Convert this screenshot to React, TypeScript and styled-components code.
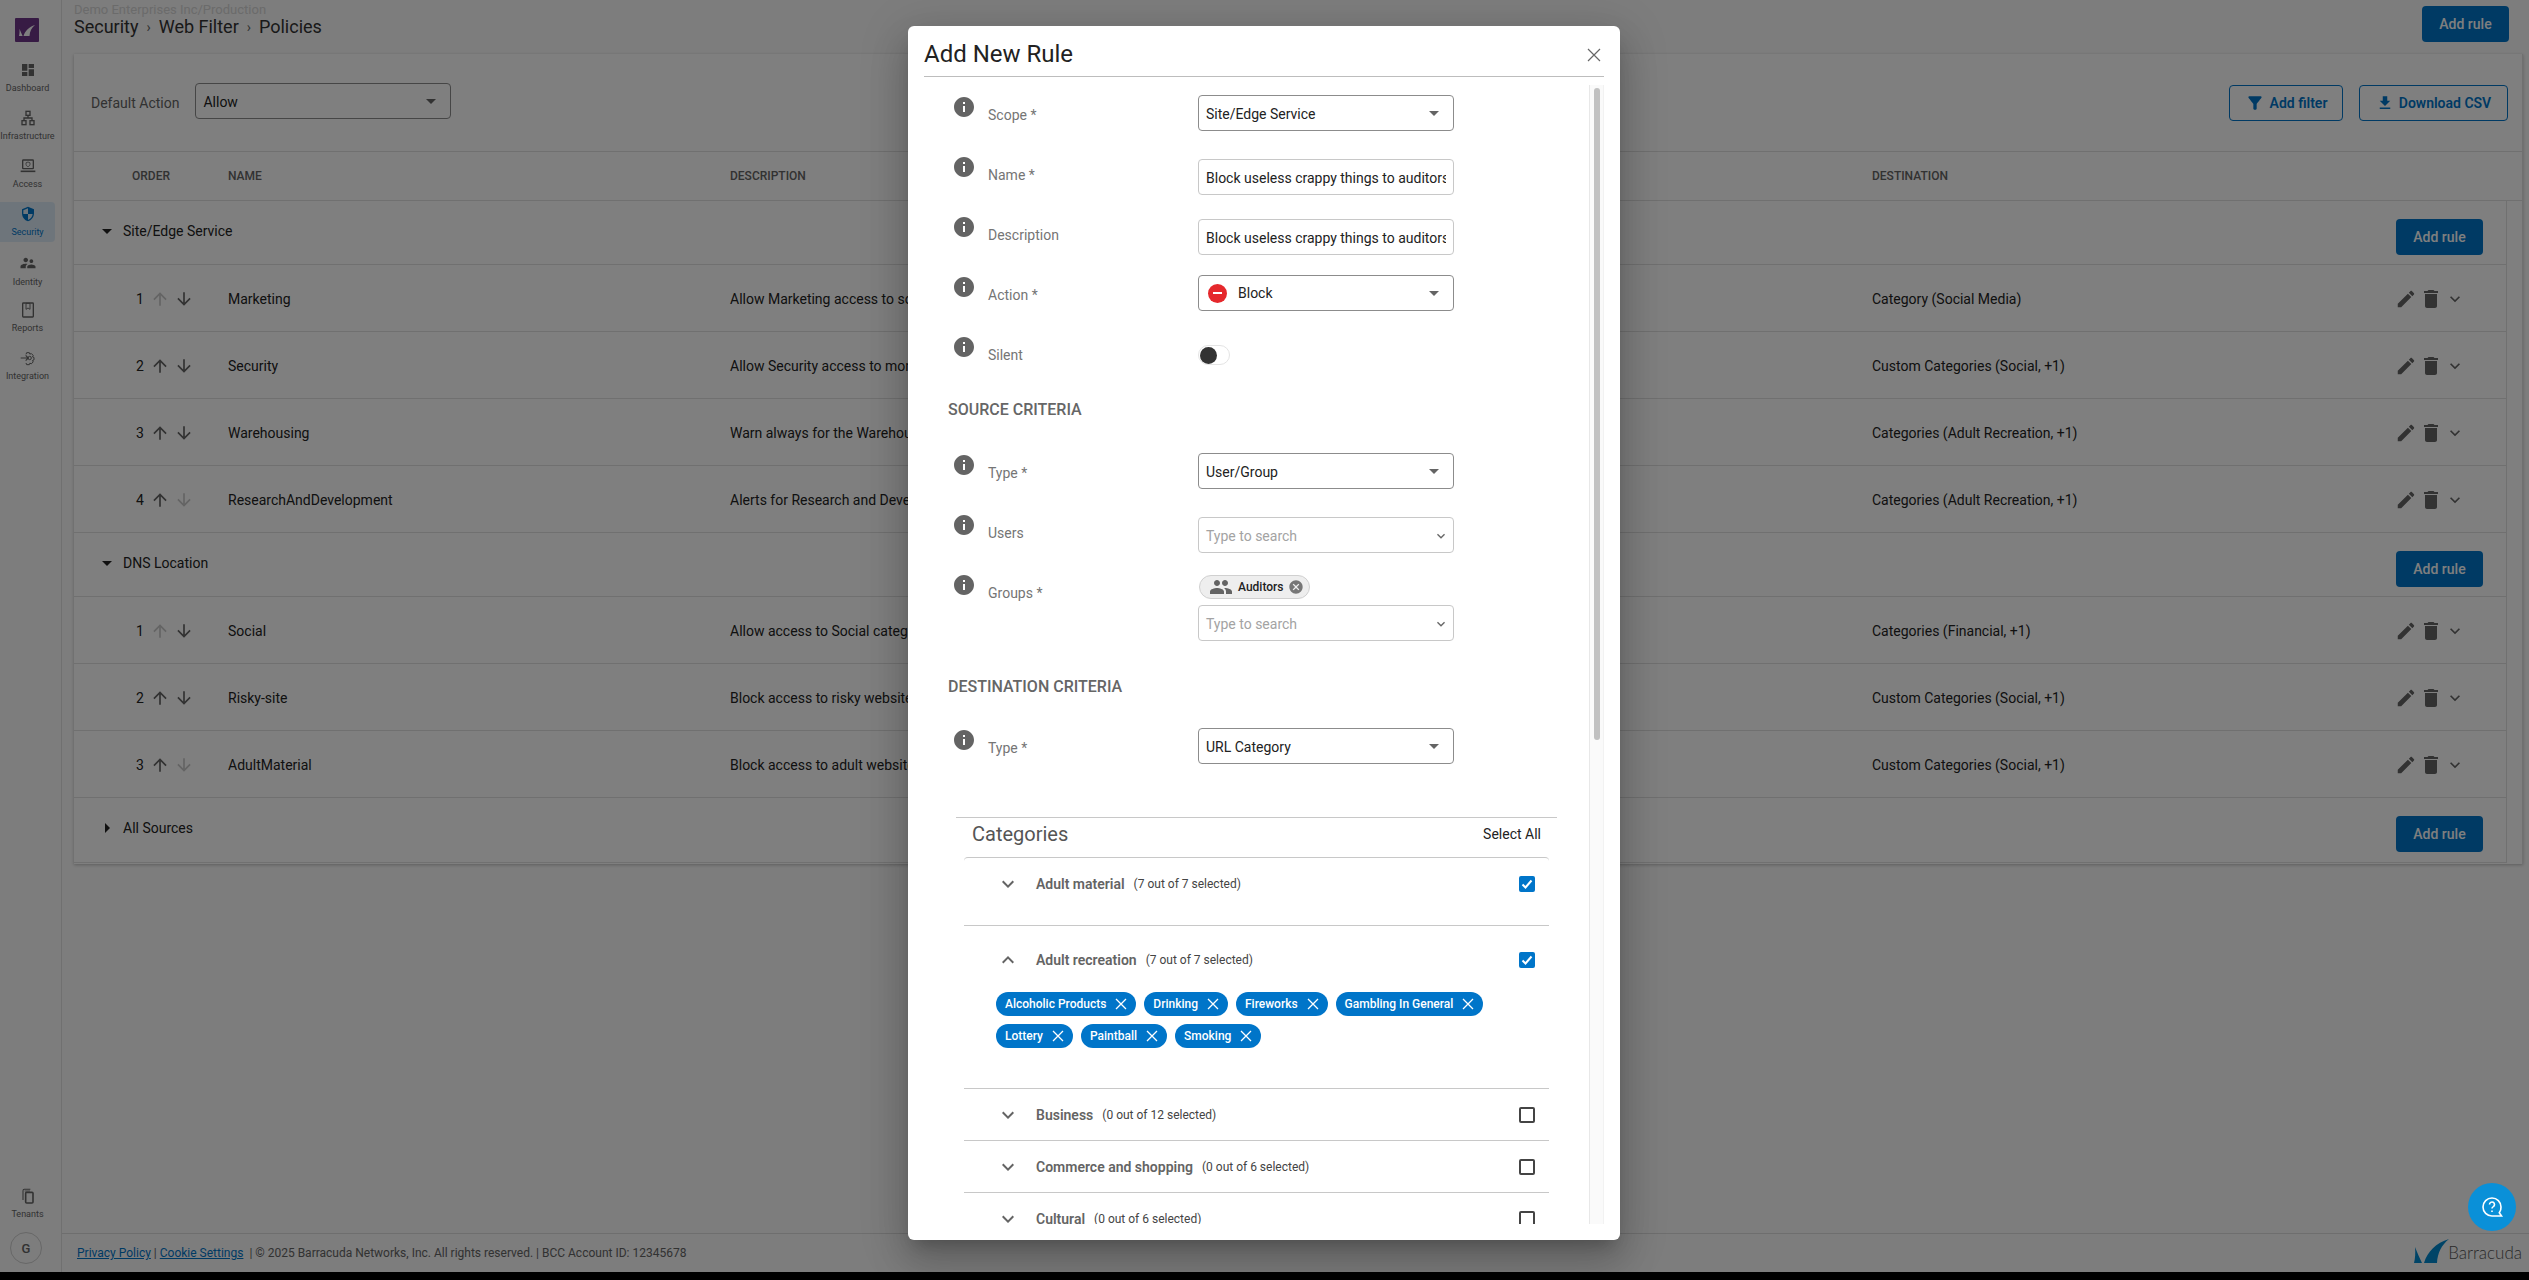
import React, { FunctionComponent } from "react";
import styled, { createGlobalStyle } from "styled-components";

const blue = "#0075c9";
const grey = "#646464";

const GlobalStyle = createGlobalStyle`
  html, body {
    margin: 0;
    background: #000;
    overflow: hidden;
    font-family: Roboto, "Liberation Sans", sans-serif;
    font-size: 14px;
  }
  * { box-sizing: border-box; }
`;

const paths = {
  info: "M12 2C6.48 2 2 6.48 2 12s4.48 10 10 10 10-4.48 10-10S17.52 2 12 2zm1 15h-2v-6h2v6zm0-8h-2V7h2v2z",
  dashboard: "M3 13h8V3H3v10zm0 8h8v-6H3v6zm10 0h8V11h-8v10zm0-18v6h8V3h-8z",
  security:
    "M12 1L3 5v6c0 5.55 3.84 10.74 9 12 5.16-1.26 9-6.45 9-12V5l-9-4zm0 10.99h7c-.53 4.12-3.28 7.79-7 8.94V12H5V6.3l7-3.11v8.8z",
  identity:
    "M16.5 12c1.38 0 2.49-1.12 2.49-2.5S17.88 7 16.5 7C15.12 7 14 8.12 14 9.5s1.12 2.5 2.5 2.5zM9 11c1.66 0 3-1.34 3-3s-1.34-3-3-3-3 1.34-3 3 1.34 3 3 3zm7.5 3c-1.83 0-5.5.92-5.5 2.75V19h11v-2.25c0-1.83-3.67-2.75-5.5-2.75zM9 13c-2.33 0-7 1.17-7 3.5V19h7v-2.25c0-.85.33-2.34 2.37-3.47C10.5 13.1 9.66 13 9 13z",
  up: "M4 12l1.41 1.41L11 7.83V20h2V7.83l5.58 5.59L20 12l-8-8-8 8z",
  down: "M20 12l-1.41-1.41L13 16.17V4h-2v12.17l-5.58-5.59L4 12l8 8 8-8z",
  edit: "M3 17.25V21h3.75L17.81 9.94l-3.75-3.75L3 17.25zM20.71 7.04c.39-.39.39-1.02 0-1.41l-2.34-2.34c-.39-.39-1.02-.39-1.41 0l-1.83 1.83 3.75 3.75 1.83-1.83z",
  trash: "M6 19c0 1.1.9 2 2 2h8c1.1 0 2-.9 2-2V7H6v12zM19 4h-3.5l-1-1h-5l-1 1H5v2h14V4z",
  expand: "M7.41 8.59L12 13.17l4.59-4.58L18 10l-6 6-6-6 1.41-1.41z",
  collapse: "M12 8l-6 6 1.41 1.41L12 10.83l4.59 4.58L18 14z",
  caret: "M7 10l5 5 5-5z",
  caretRight: "M10 7l5 5-5 5z",
  filter:
    "M4.25 5.61C6.27 8.2 10 13 10 13v6c0 .55.45 1 1 1h2c.55 0 1-.45 1-1v-6s3.72-4.8 5.74-7.39c.51-.66.04-1.61-.79-1.61H5.04c-.83 0-1.3.95-.79 1.61z",
  download: "M19 9h-4V3H9v6H5l7 7 7-7zM5 18v2h14v-2H5z",
  group:
    "M16 11c1.66 0 2.99-1.34 2.99-3S17.66 5 16 5c-1.66 0-3 1.34-3 3s1.34 3 3 3zm-8 0c1.66 0 2.99-1.34 2.99-3S9.66 5 8 5C6.34 5 5 6.34 5 8s1.34 3 3 3zm0 2c-2.33 0-7 1.17-7 3.5V19h14v-2.5c0-2.33-4.67-3.5-7-3.5zm8 0c-.29 0-.62.02-.97.05 1.16.84 1.97 1.97 1.97 3.45V19h6v-2.5c0-2.33-4.67-3.5-7-3.5z",
  cancel:
    "M12 2C6.47 2 2 6.47 2 12s4.47 10 10 10 10-4.47 10-10S17.53 2 12 2zm5 13.59L15.59 17 12 13.41 8.41 17 7 15.59 10.59 12 7 8.41 8.41 7 12 10.59 15.59 7 17 8.41 13.41 12 17 15.59z",
};

const Svg = styled.svg<{ $size: number; $color?: string; $dim?: boolean }>`
  width: ${(p) => p.$size}px;
  height: ${(p) => p.$size}px;
  flex: none;
  display: block;
  fill: ${(p) => p.$color || grey};
  opacity: ${(p) => (p.$dim ? 0.35 : 1)};
`;

type IconProps = { d: string; size?: number; color?: string; dim?: boolean };

const Icon: FunctionComponent<IconProps> = ({ d, size = 24, color, dim }) => (
  <Svg viewBox="0 0 24 24" $size={size} $color={color} $dim={dim}>
    <path d={d} />
  </Svg>
);

const Outline = styled.svg<{ $color?: string }>`
  width: 16px;
  height: 16px;
  display: block;
  fill: none;
  stroke: ${(p) => p.$color || grey};
  stroke-width: 2;
`;

const InfrastructureIcon = () => (
  <Outline viewBox="0 0 24 24">
    <rect x="9" y="2" width="6" height="6" />
    <rect x="3" y="16" width="6" height="6" />
    <rect x="15" y="16" width="6" height="6" />
    <path d="M12 8v4M6 16v-4h12v4" />
  </Outline>
);

const AccessIcon = () => (
  <Outline viewBox="0 0 24 24">
    <rect x="4" y="3" width="16" height="13" rx="1" />
    <path d="M1 20h22" strokeWidth="2.4" />
    <path d="M12 6l3 1.2v2.3c0 1.6-1.3 2.9-3 3.5-1.7-.6-3-1.9-3-3.5V7.2z" strokeWidth="1.2" />
  </Outline>
);

const ReportsIcon = () => (
  <Outline viewBox="0 0 24 24">
    <rect x="4" y="1.5" width="16" height="21" rx="1" />
    <path d="M9 2v9l3-2 3 2V2z" strokeWidth="1.4" />
  </Outline>
);

const IntegrationIcon = () => (
  <Outline viewBox="0 0 24 24">
    <path d="M1 12h11M8.5 8l4 4-4 4" strokeWidth="1.6" />
    <path
      d="M9 6.5l1-2.5h4l.8 2.2 2.2-.9 2.8 2.8-1 2.2 2.2.9v3.6l-2.2.9 1 2.2-2.8 2.8-2.2-.9-.8 2.2h-4l-1-2.5"
      strokeWidth="1.5"
    />
    <circle cx="14.5" cy="12" r="2.5" strokeWidth="1.5" />
  </Outline>
);

const TenantsIcon = () => (
  <Outline viewBox="0 0 24 24">
    <rect x="8.5" y="6.5" width="11" height="16" rx="1.5" strokeWidth="2.4" />
    <path d="M4.5 18V4a2 2 0 0 1 2-2h9" strokeWidth="1.6" />
    <path d="M7 4.5h8" strokeWidth="1.2" />
  </Outline>
);

const FinSvg = styled.svg<{ $w: number; $h: number; $color: string }>`
  width: ${(p) => p.$w}px;
  height: ${(p) => p.$h}px;
  display: block;
  fill: ${(p) => p.$color};
`;

const Fins: FunctionComponent<{ w: number; h: number; color: string }> = ({ w, h, color }) => (
  <FinSvg viewBox="0 0 35 24" $w={w} $h={h} $color={color}>
    <path d="M0 24c1.2-4.5 1.6-10 1-16 2 5.500 4.800 11 7 16z" />
    <path d="M10 24C13.500 12.500 22 4 35 0c-7.500 6-11.500 14-12 24z" />
  </FinSvg>
);

const Page = styled.div`
  position: relative;
  display: flex;
  height: 1272px;
  overflow: hidden;
  background: #fafafa;
  color: #222;
`;

const Sidebar = styled.nav`
  width: 62px;
  flex: none;
  display: flex;
  flex-direction: column;
  border-right: 1px solid #e0e0e0;
  padding-top: 18px;
`;

const Logo = styled.div`
  width: 24px;
  height: 24px;
  margin: 0 0 16px 15px;
  background: #6f3689;
  border-radius: 1px;
  display: flex;
  align-items: center;
  justify-content: center;
`;

const NavList = styled.div`
  display: flex;
  flex-direction: column;
  gap: 8px;
`;

const NavItem = styled.div<{ $active?: boolean }>`
  width: 55px;
  height: 40px;
  padding-top: 4px;
  display: flex;
  flex-direction: column;
  align-items: center;
  gap: 4px;
  border-radius: 0 4px 4px 0;
  background: ${(p) => (p.$active ? "#dcebf7" : "transparent")};
  color: ${(p) => (p.$active ? blue : grey)};
  font-size: 9px;
  line-height: 12px;
`;

const SidebarFoot = styled.div`
  margin-top: auto;
  display: flex;
  flex-direction: column;
  gap: 8px;
  padding-bottom: 8px;
`;

const Avatar = styled.div`
  width: 32px;
  height: 32px;
  margin-left: 10px;
  border-radius: 50%;
  border: 1px solid #cfcfcf;
  display: flex;
  align-items: center;
  justify-content: center;
  font-size: 13px;
  font-weight: 500;
  color: ${grey};
`;

const Main = styled.main`
  flex: 1;
  min-width: 0;
  display: flex;
  flex-direction: column;
`;

const TopBar = styled.header`
  height: 54px;
  flex: none;
  display: flex;
  justify-content: space-between;
  align-items: flex-start;
  padding: 0 20px 0 12px;
`;

const Tenant = styled.div`
  margin-top: 3px;
  font-size: 13px;
  line-height: 14px;
  color: #d6d6d6;
`;

const Crumbs = styled.div`
  display: flex;
  align-items: center;
  gap: 8px;
  font-size: 18px;
  line-height: 22px;
  margin-top: -1px;
  color: #333;
`;

const CrumbSep = styled.span`
  font-size: 14px;
  color: ${grey};
`;

const FilledButton = styled.div<{ $top?: number }>`
  width: 87px;
  height: 36px;
  margin-top: ${(p) => p.$top || 0}px;
  flex: none;
  display: flex;
  align-items: center;
  justify-content: center;
  border-radius: 4px;
  background: ${blue};
  color: #fff;
  font-weight: 500;
`;

const Card = styled.section`
  height: 810px;
  flex: none;
  margin: 0 6px 0 12px;
  background: #fff;
  border-right: 1px solid #e0e0e0;
  box-shadow: 0 1px 3px rgba(0, 0, 0, 0.25);
`;

const Toolbar = styled.div`
  height: 98px;
  display: flex;
  align-items: center;
  padding: 0 14px 0 17px;
  border-bottom: 1px solid #e0e0e0;
`;

const ToolbarLabel = styled.span`
  color: ${grey};
  margin-right: 16px;
`;

const ToolbarActions = styled.div`
  margin-left: auto;
  display: flex;
  gap: 16px;
`;

const OutlineButton = styled.div<{ $w: number }>`
  width: ${(p) => p.$w}px;
  height: 36px;
  display: flex;
  align-items: center;
  justify-content: center;
  gap: 5px;
  border: 1px solid ${blue};
  border-radius: 4px;
  color: ${blue};
  font-weight: 600;
`;

const SelectBox = styled.div<{ $up?: number }>`
  width: 256px;
  height: 36px;
  margin-top: ${(p) => -(p.$up || 0)}px;
  display: flex;
  align-items: center;
  gap: 11px;
  padding: 0 7px;
  background: #fff;
  border: 1px solid #8c8c8c;
  border-radius: 4px;
  color: #222;
`;

const Grow = styled.span`
  flex: 1;
  min-width: 0;
`;

const SelectText = styled(Grow)`
  padding-top: 2px;
`;

const HeadRow = styled.div`
  height: 49px;
  display: flex;
  align-items: center;
  border-bottom: 1px solid #e0e0e0;
  font-size: 12px;
  font-weight: 500;
  color: ${grey};
`;

const HeadCell = styled.div<{ $w?: number; $left?: number }>`
  width: ${(p) => (p.$w ? `${p.$w}px` : "auto")};
  padding-left: ${(p) => p.$left || 0}px;
  flex: none;
`;

const TableBody = styled.div`
  margin-right: 15px;
  border-right: 1px solid #e0e0e0;
`;

const GroupRow = styled.div<{ $h?: number }>`
  height: ${(p) => p.$h || 64}px;
  display: flex;
  align-items: center;
  padding: 0 23px 0 21px;
  border-bottom: 1px solid #e0e0e0;
`;

const GroupName = styled.span`
  margin: -4px 0 0 4px;
`;

const GroupCaret = styled.span`
  margin-top: -4px;
`;

const RuleRow = styled.div`
  height: 67px;
  padding-top: 2px;
  display: flex;
  align-items: center;
  border-bottom: 1px solid #e0e0e0;
`;

const OrderCell = styled.div`
  width: 154px;
  flex: none;
  display: flex;
  align-items: center;
  gap: 4px;
  padding-left: 62px;
`;

const OrderNumber = styled.span`
  width: 10px;
  flex: none;
`;

const NameCell = styled.div`
  width: 502px;
  flex: none;
`;

const DescriptionCell = styled.div`
  width: 1142px;
  flex: none;
  white-space: nowrap;
`;

const DestinationCell = styled.div`
  flex: 1;
`;

const RowActions = styled.div`
  display: flex;
  align-items: center;
  gap: 2px;
  margin-right: 41px;
`;

const Footer = styled.footer`
  margin-top: auto;
  height: 39px;
  flex: none;
  display: flex;
  align-items: center;
  padding-left: 15px;
  border-top: 1px solid #dcdcdc;
  font-size: 12px;
  color: ${grey};
  white-space: pre;
`;

const FooterLink = styled.a`
  color: ${blue};
  text-decoration: underline;
`;

const Brand = styled.div`
  position: absolute;
  right: 7px;
  bottom: 9px;
  display: flex;
  align-items: flex-end;
`;

const BrandName = styled.span`
  font-family: Lato, Roboto, sans-serif;
  font-weight: 300;
  font-size: 17px;
  line-height: 20px;
  color: #555;
  margin-left: -1px;
`;

const Overlay = styled.div`
  position: absolute;
  inset: 0;
  display: flex;
  justify-content: center;
  padding: 26px 1px 32px 0;
  background: rgba(0, 0, 0, 0.5);
`;

const Modal = styled.div`
  width: 712px;
  display: flex;
  flex-direction: column;
  padding: 0 16px 16px;
  background: #fff;
  border-radius: 6px;
  box-shadow: 0 11px 15px -7px rgba(0, 0, 0, 0.2), 0 24px 38px 3px rgba(0, 0, 0, 0.14),
    0 9px 46px 8px rgba(0, 0, 0, 0.12);
`;

const ModalHead = styled.div`
  height: 51px;
  flex: none;
  display: flex;
  align-items: center;
  justify-content: space-between;
  border-bottom: 1px solid #bdbdbd;
`;

const ModalTitle = styled.h2`
  margin: 6px 0 0;
  font-size: 24px;
  font-weight: 400;
  color: #222;
`;

const CloseGlyph = styled.svg`
  width: 20px;
  height: 20px;
  margin-top: 8px;
  fill: none;
  stroke: #666;
  stroke-width: 1.2;
`;

const ScrollArea = styled.div`
  position: relative;
  flex: 1;
  min-height: 0;
  margin-top: 8px;
`;

const ModalBody = styled.div`
  height: 100%;
  overflow: hidden;
`;

const ScrollTrack = styled.div`
  position: absolute;
  top: 0;
  right: 0;
  bottom: 0;
  width: 15px;
  padding: 3px 3px 0 4px;
  background: #fafafa;
  border-left: 1px solid #e8e8e8;
  border-right: 1px solid #f2f2f2;
`;

const ScrollThumb = styled.div`
  height: 652px;
  border-radius: 4px;
  background: #c1c1c1;
`;

const FormRow = styled.div`
  display: grid;
  grid-template-columns: 36px 210px 256px;
  min-height: 60px;
  padding-left: 28px;
  align-items: start;
`;

const InfoSlot = styled.div`
  padding-top: 10px;
`;

const FieldLabel = styled.div`
  padding-top: 20px;
  line-height: 20px;
  color: #757575;
`;

const Field = styled.div<{ $top: number; $bottom?: number }>`
  padding-top: ${(p) => p.$top}px;
  padding-bottom: ${(p) => p.$bottom || 0}px;
`;

const SectionTitle = styled.h3<{ $after: number }>`
  margin: 0 0 ${(p) => p.$after}px;
  height: 48px;
  padding-left: 24px;
  display: flex;
  align-items: center;
  font-size: 16px;
  font-weight: 500;
  color: #666;
`;

const TextBox = styled.div`
  width: 256px;
  height: 36px;
  padding: 2px 7px 0;
  display: flex;
  align-items: center;
  border: 1px solid #c8c8c8;
  border-radius: 4px;
  color: #222;
  white-space: nowrap;
`;

const Clipped = styled.span`
  display: block;
  overflow: hidden;
`;

const SearchBox = styled(TextBox)`
  justify-content: space-between;
  color: #a3a3a3;
  padding-right: 4px;
`;

const BlockDot = styled.span`
  width: 19px;
  height: 19px;
  flex: none;
  margin-left: 2px;
  border-radius: 50%;
  background: #e5282c;
  display: flex;
  align-items: center;
  justify-content: center;

  &::after {
    content: "";
    width: 9px;
    height: 2.5px;
    background: #fff;
  }
`;

const Toggle = styled.div`
  width: 32px;
  height: 20px;
  padding-left: 1px;
  display: flex;
  align-items: center;
  border: 1px solid #e4e4e4;
  border-radius: 10px;
  background: #fff;

  &::before {
    content: "";
    width: 17px;
    height: 17px;
    border-radius: 50%;
    background: #333;
  }
`;

const GroupChip = styled.div`
  width: 111px;
  height: 24px;
  margin: 0 0 6px 1px;
  display: flex;
  align-items: center;
  padding-left: 9px;
  border: 1px solid #d0d0d0;
  border-radius: 12px;
  background: #eee;
  font-size: 12px;
  font-weight: 500;
  color: #222;
`;

const ChipLabel = styled.span`
  margin: 0 5px 0 5px;
`;

const Categories = styled.div`
  margin: 39px 0 0 32px;
  width: 601px;
  border-top: 1px solid #c8c8c8;
`;

const CategoriesHead = styled.div`
  height: 39px;
  padding: 0 16px 7px;
  display: flex;
  align-items: center;
  justify-content: space-between;
`;

const CategoriesTitle = styled.span`
  font-size: 20px;
  color: #555;
`;

const Accordion = styled.div`
  margin: 0 8px;
  border-top: 1px solid #c8c8c8;
  border-radius: 4px 4px 0 0;
`;

const Category = styled.div<{ $gap?: number; $extra?: number }>`
  padding-top: ${(p) => p.$gap || 0}px;
  padding-bottom: ${(p) => p.$extra || 0}px;
  border-bottom: 1px solid #c8c8c8;
`;

const CategoryHead = styled.div`
  height: 51px;
  display: flex;
  align-items: center;
  padding: 0 14px 0 32px;
`;

const CategoryName = styled.span`
  margin-left: 16px;
  font-weight: 600;
  color: ${grey};
`;

const CategoryCount = styled.span`
  margin-left: 9px;
  font-size: 12px;
  color: #444;
`;

const Check = styled.span<{ $on?: boolean }>`
  width: 16px;
  height: 16px;
  margin-left: auto;
  border-radius: 2px;
  border: 2px solid ${(p) => (p.$on ? blue : "#444")};
  background: ${(p) => (p.$on ? blue : "#fff")};
  display: flex;
  align-items: center;
  justify-content: center;
`;

const CheckMark = styled.svg`
  width: 12px;
  height: 12px;
  fill: none;
  stroke: #fff;
  stroke-width: 2;
`;

const ChipWrap = styled.div`
  display: flex;
  flex-wrap: wrap;
  gap: 8px;
  padding: 7px 40px 40px 32px;
`;

const TagChip = styled.div`
  height: 24px;
  display: flex;
  align-items: center;
  gap: 9px;
  padding: 0 9px;
  border-radius: 12px;
  background: ${blue};
  color: #fff;
  font-size: 12px;
  font-weight: 500;
`;

const TagX = styled.svg`
  width: 12px;
  height: 12px;
  fill: none;
  stroke: #fff;
  stroke-width: 1.3;
`;

const HelpButton = styled.div`
  position: absolute;
  left: 2468px;
  top: 1183px;
  width: 48px;
  height: 48px;
  border-radius: 50%;
  background: #0a90d8;
  display: flex;
  align-items: center;
  justify-content: center;
`;

const HelpGlyph = styled.svg`
  width: 24px;
  height: 24px;
  fill: none;
  stroke: #fff;
  stroke-width: 1.6;
`;

const navItems = [
  { label: "Dashboard", icon: <Icon d={paths.dashboard} size={16} /> },
  { label: "Infrastructure", icon: <InfrastructureIcon /> },
  { label: "Access", icon: <AccessIcon /> },
  { label: "Security", icon: <Icon d={paths.security} size={16} color={blue} />, active: true },
  { label: "Identity", icon: <Icon d={paths.identity} size={18} /> },
  { label: "Reports", icon: <ReportsIcon /> },
  { label: "Integration", icon: <IntegrationIcon /> },
];

const siteRules = [
  { name: "Marketing", desc: "Allow Marketing access to social media", dest: "Category (Social Media)", upOff: true },
  { name: "Security", desc: "Allow Security access to monitoring tools", dest: "Custom Categories (Social, +1)" },
  { name: "Warehousing", desc: "Warn always for the Warehousing team", dest: "Categories (Adult Recreation, +1)" },
  { name: "ResearchAndDevelopment", desc: "Alerts for Research and Development", dest: "Categories (Adult Recreation, +1)", downOff: true },
];

const dnsRules = [
  { name: "Social", desc: "Allow access to Social categories", dest: "Categories (Financial, +1)", upOff: true },
  { name: "Risky-site", desc: "Block access to risky websites", dest: "Custom Categories (Social, +1)" },
  { name: "AdultMaterial", desc: "Block access to adult websites", dest: "Custom Categories (Social, +1)", downOff: true },
];

type Rule = { name: string; desc: string; dest: string; upOff?: boolean; downOff?: boolean };

const RuleLine: FunctionComponent<{ rule: Rule; order: number }> = ({ rule, order }) => (
  <RuleRow>
    <OrderCell>
      <OrderNumber>{order}</OrderNumber>
      <Icon d={paths.up} size={20} dim={rule.upOff} />
      <Icon d={paths.down} size={20} dim={rule.downOff} />
    </OrderCell>
    <NameCell>{rule.name}</NameCell>
    <DescriptionCell>{rule.desc}</DescriptionCell>
    <DestinationCell>{rule.dest}</DestinationCell>
    <RowActions>
      <Icon d={paths.edit} size={22} />
      <Icon d={paths.trash} size={24} />
      <Icon d={paths.expand} size={20} />
    </RowActions>
  </RuleRow>
);

const Group: FunctionComponent<{ name: string; open?: boolean; h?: number }> = ({ name, open = true, h }) => (
  <GroupRow $h={h}>
    <GroupCaret>
      <Icon d={open ? paths.caret : paths.caretRight} size={24} color="#222" />
    </GroupCaret>
    <GroupName>{name}</GroupName>
    <Grow />
    <FilledButton $top={8}>Add rule</FilledButton>
  </GroupRow>
);

const Row: FunctionComponent<{ label: string; top: number; bottom?: number; children: React.ReactNode }> = ({
  label,
  top,
  bottom,
  children,
}) => (
  <FormRow>
    <InfoSlot>
      <Icon d={paths.info} />
    </InfoSlot>
    <FieldLabel>{label}</FieldLabel>
    <Field $top={top} $bottom={bottom}>
      {children}
    </Field>
  </FormRow>
);

const Select: FunctionComponent<{ children: React.ReactNode }> = ({ children }) => (
  <SelectBox>
    {children}
    <Icon d={paths.caret} />
  </SelectBox>
);

const Search = () => (
  <SearchBox>
    Type to search
    <Icon d={paths.expand} size={16} color="#666" />
  </SearchBox>
);

const recreation = ["Alcoholic Products", "Drinking", "Fireworks", "Gambling In General", "Lottery", "Paintball", "Smoking"];

const CategoryLine: FunctionComponent<{ name: string; count: string; on?: boolean; open?: boolean }> = ({
  name,
  count,
  on,
  open,
}) => (
  <CategoryHead>
    <Icon d={open ? paths.collapse : paths.expand} color={grey} />
    <CategoryName>{name}</CategoryName>
    <CategoryCount>{count}</CategoryCount>
    <Check $on={on}>
      {on && (
        <CheckMark viewBox="0 0 12 12">
          <path d="M1.500 6.500l3 3 6-7" />
        </CheckMark>
      )}
    </Check>
  </CategoryHead>
);

export default function App() {
  return (
    <Page>
      <GlobalStyle />
      <Sidebar>
        <Logo>
          <Fins w={16} h={11} color="#fff" />
        </Logo>
        <NavList>
          {navItems.map((item) => (
            <NavItem key={item.label} $active={item.active}>
              {item.icon}
              {item.label}
            </NavItem>
          ))}
        </NavList>
        <SidebarFoot>
          <NavItem>
            <TenantsIcon />
            Tenants
          </NavItem>
          <Avatar>G</Avatar>
        </SidebarFoot>
      </Sidebar>

      <Main>
        <TopBar>
          <div>
            <Tenant>Demo Enterprises Inc/Production</Tenant>
            <Crumbs>
              Security <CrumbSep>›</CrumbSep> Web Filter <CrumbSep>›</CrumbSep> Policies
            </Crumbs>
          </div>
          <FilledButton $top={6}>Add rule</FilledButton>
        </TopBar>

        <Card>
          <Toolbar>
            <ToolbarLabel>Default Action</ToolbarLabel>
            <SelectBox $up={4}>
              <SelectText>Allow</SelectText>
              <Icon d={paths.caret} />
            </SelectBox>
            <ToolbarActions>
              <OutlineButton $w={114}>
                <Icon d={paths.filter} size={20} color={blue} />
                Add filter
              </OutlineButton>
              <OutlineButton $w={149}>
                <Icon d={paths.download} size={18} color={blue} />
                Download CSV
              </OutlineButton>
            </ToolbarActions>
          </Toolbar>
          <HeadRow>
            <HeadCell $w={154} $left={58}>
              ORDER
            </HeadCell>
            <HeadCell $w={502}>NAME</HeadCell>
            <HeadCell $w={1142}>DESCRIPTION</HeadCell>
            <HeadCell>DESTINATION</HeadCell>
          </HeadRow>
          <TableBody>
            <Group name="Site/Edge Service" />
            {siteRules.map((rule, i) => (
              <RuleLine key={rule.name} rule={rule} order={i + 1} />
            ))}
            <Group name="DNS Location" />
            {dnsRules.map((rule, i) => (
              <RuleLine key={rule.name} rule={rule} order={i + 1} />
            ))}
            <Group name="All Sources" open={false} h={65} />
          </TableBody>
        </Card>

        <Footer>
          <FooterLink>Privacy Policy</FooterLink> | <FooterLink>Cookie Settings</FooterLink>
          {"  | © 2025 Barracuda Networks, Inc. All rights reserved. | BCC Account ID: 12345678"}
        </Footer>
      </Main>

      <Brand>
        <Fins w={35} h={24} color="#0088ce" />
        <BrandName>Barracuda</BrandName>
      </Brand>

      <Overlay>
        <Modal>
          <ModalHead>
            <ModalTitle>Add New Rule</ModalTitle>
            <CloseGlyph viewBox="0 0 20 20">
              <path d="M4 4l12 12M16 4L4 16" />
            </CloseGlyph>
          </ModalHead>
          <ScrollArea>
            <ModalBody>
              <Row label="Scope *" top={10}>
                <Select>
                  <SelectText>Site/Edge Service</SelectText>
                </Select>
              </Row>
              <Row label="Name *" top={14}>
                <TextBox>
                  <Clipped>Block useless crappy things to auditors</Clipped>
                </TextBox>
              </Row>
              <Row label="Description" top={14}>
                <TextBox>
                  <Clipped>Block useless crappy things to auditors</Clipped>
                </TextBox>
              </Row>
              <Row label="Action *" top={10}>
                <Select>
                  <BlockDot />
                  <Grow>Block</Grow>
                </Select>
              </Row>
              <Row label="Silent" top={20}>
                <Toggle />
              </Row>

              <SectionTitle $after={10}>SOURCE CRITERIA</SectionTitle>
              <Row label="Type *" top={10}>
                <Select>
                  <SelectText>User/Group</SelectText>
                </Select>
              </Row>
              <Row label="Users" top={14}>
                <Search />
              </Row>
              <Row label="Groups *" top={12} bottom={21}>
                <GroupChip>
                  <Icon d={paths.group} size={24} />
                  <ChipLabel>Auditors</ChipLabel>
                  <Icon d={paths.cancel} size={16} color="#777" />
                </GroupChip>
                <Search />
              </Row>

              <SectionTitle $after={8}>DESTINATION CRITERIA</SectionTitle>
              <Row label="Type *" top={10}>
                <Select>
                  <SelectText>URL Category</SelectText>
                </Select>
              </Row>

              <Categories>
                <CategoriesHead>
                  <CategoriesTitle>Categories</CategoriesTitle>
                  Select All
                </CategoriesHead>
                <Accordion>
                  <Category $extra={16}>
                    <CategoryLine name="Adult material" count="(7 out of 7 selected)" on />
                  </Category>
                  <Category $gap={8}>
                    <CategoryLine name="Adult recreation" count="(7 out of 7 selected)" on open />
                    <ChipWrap>
                      {recreation.map((tag) => (
                        <TagChip key={tag}>
                          {tag}
                          <TagX viewBox="0 0 12 12">
                            <path d="M1 1l10 10M11 1L1 11" />
                          </TagX>
                        </TagChip>
                      ))}
                    </ChipWrap>
                  </Category>
                  <Category>
                    <CategoryLine name="Business" count="(0 out of 12 selected)" />
                  </Category>
                  <Category>
                    <CategoryLine name="Commerce and shopping" count="(0 out of 6 selected)" />
                  </Category>
                  <Category>
                    <CategoryLine name="Cultural" count="(0 out of 6 selected)" />
                  </Category>
                </Accordion>
              </Categories>
            </ModalBody>
            <ScrollTrack>
              <ScrollThumb />
            </ScrollTrack>
          </ScrollArea>
        </Modal>
      </Overlay>

      <HelpButton>
        <HelpGlyph viewBox="0 0 24 24">
          <path d="M21 12a9 9 0 1 0-9 9h9.500l-2.200-3.200A9 9 0 0 0 21 12z" />
          <path d="M9.500 9.500a2.500 2.500 0 1 1 3.800 2.100c-.9.500-1.300 1-1.300 2" />
          <path d="M12 15.600v1.500" />
        </HelpGlyph>
      </HelpButton>
    </Page>
  );
}
